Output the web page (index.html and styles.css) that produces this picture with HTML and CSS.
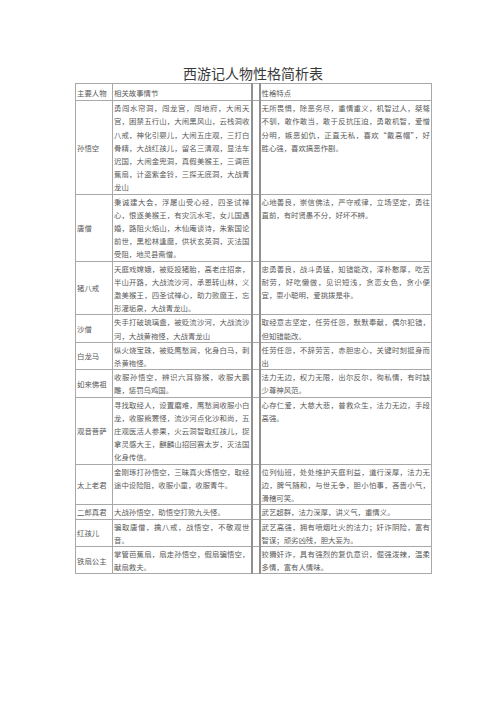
FILE: index.html
```html
<!DOCTYPE html>
<html lang="zh-CN">
<head>
<meta charset="utf-8">
<title>西游记人物性格简析表</title>
<link rel="stylesheet" href="styles.css">
</head>
<body>
<div class="page">
  <h1 class="title">西游记人物性格简析表</h1>
  <table class="sheet">
    <colgroup>
      <col class="c-name"><col class="c-story"><col class="c-gap"><col class="c-trait">
    </colgroup>
    <tr class="head">
      <td>主要人物</td><td>相关故事情节</td><td class="gap"></td><td>性格特点</td>
    </tr>
    <tr>
      <td class="name">孙悟空</td>
      <td class="txt"><span>勇闯水帘洞，闯龙宫，闯地府，大闹天</span><span>宫，困禁五行山，大闹黑风山，云栈洞收</span><span>八戒，神化引婴儿，大闹五庄观，三打白</span><span>骨精，大战红孩儿，留名三清观，显法车</span><span>迟国，大闹金兜洞，真假美猴王，三调芭</span><span>蕉扇，计盗紫金铃，三探无底洞，大战青</span><span>龙山</span></td>
      <td class="gap"></td>
      <td class="txt"><span>无所畏惧，除恶务尽，重情重义，机智过人，桀骜</span><span>不驯，敢作敢当，敢于反抗压迫，勇敢机智，爱憎</span><span>分明，嫉恶如仇，正直无私，喜欢“戴高帽”，好</span><span>胜心强，喜欢搞恶作剧。</span></td>
    </tr>
    <tr>
      <td class="name">唐僧</td>
      <td class="txt"><span>秉诚建大会，浮屠山受心经，四圣试禅</span><span>心，恨逐美猴王，有灾沉水宅，女儿国遇</span><span>婚，路阻火焰山，木仙庵谈诗，朱紫国论</span><span>前世，黑松林逢魔，供状玄英洞，灭法国</span><span>受阻，地灵县斋僧。</span></td>
      <td class="gap"></td>
      <td class="txt"><span>心地善良，崇信佛法，严守戒律，立场坚定，勇往</span><span>直前，有时贤愚不分，好坏不辨。</span></td>
    </tr>
    <tr>
      <td class="name">猪八戒</td>
      <td class="txt"><span>天庭戏嫦娥，被贬投猪胎，高老庄招亲，</span><span>半山开路，大战流沙河，承恩转山林，义</span><span>激美猴王，四圣试禅心，助力败魔王，忘</span><span>形灌垢泉，大战青龙山。</span></td>
      <td class="gap"></td>
      <td class="txt"><span>忠勇善良，战斗勇猛，知错能改，淳朴憨厚，吃苦</span><span>耐劳，好吃懒做，见识短浅，贪恋女色，贪小便</span><span>宜，耍小聪明，爱挑拨是非。</span></td>
    </tr>
    <tr>
      <td class="name">沙僧</td>
      <td class="txt"><span>失手打破琉璃盏，被贬流沙河，大战流沙</span><span>河，大战黄袍怪，大战青龙山</span></td>
      <td class="gap"></td>
      <td class="txt"><span>取经意志坚定，任劳任怨，默默奉献，偶尔犯错，</span><span>但知错能改。</span></td>
    </tr>
    <tr>
      <td class="name">白龙马</td>
      <td class="txt"><span>纵火烧宝珠，被贬鹰愁涧，化身白马，刺</span><span>杀黄袍怪。</span></td>
      <td class="gap"></td>
      <td class="txt"><span>任劳任怨，不辞劳苦，赤胆忠心，关键时刻挺身而</span><span>出</span></td>
    </tr>
    <tr>
      <td class="name">如来佛祖</td>
      <td class="txt"><span>收服孙悟空，辨识六耳猕猴，收服大鹏</span><span>雕，惩罚乌鸡国。</span></td>
      <td class="gap"></td>
      <td class="txt"><span>法力无边，权力无限，出尔反尔，徇私情，有时缺</span><span>少尊神风范。</span></td>
    </tr>
    <tr>
      <td class="name">观音菩萨</td>
      <td class="txt"><span>寻找取经人，设置磨难，鹰愁涧收服小白</span><span>龙，收服熊罴怪，流沙河点化沙和尚，五</span><span>庄观医活人参果，火云洞智取红孩儿，捉</span><span>拿灵感大王，麒麟山招回赛太岁，灭法国</span><span>化身传信。</span></td>
      <td class="gap"></td>
      <td class="txt"><span>心存仁爱，大慈大悲，普救众生，法力无边，手段</span><span>高强。</span></td>
    </tr>
    <tr>
      <td class="name">太上老君</td>
      <td class="txt"><span>金刚琢打孙悟空，三昧真火炼悟空，取经</span><span>途中设险阻，收服小童，收服青牛。</span></td>
      <td class="gap"></td>
      <td class="txt"><span>位列仙班，处处维护天庭利益，道行深厚，法力无</span><span>边，脾气随和，与世无争，胆小怕事，吝啬小气，</span><span>滑稽可笑。</span></td>
    </tr>
    <tr>
      <td class="name">二郎真君</td>
      <td class="txt"><span>大战孙悟空，助悟空打败九头怪。</span></td>
      <td class="gap"></td>
      <td class="txt"><span>武艺超群，法力深厚，讲义气，重情义。</span></td>
    </tr>
    <tr>
      <td class="name">红孩儿</td>
      <td class="txt"><span>骗取唐僧，擒八戒，战悟空，不敬观世</span><span>音。</span></td>
      <td class="gap"></td>
      <td class="txt"><span>武艺高强，拥有喷烟吐火的法力；奸诈阴险，富有</span><span>智谋；顽劣凶残，胆大妄为。</span></td>
    </tr>
    <tr>
      <td class="name">铁扇公主</td>
      <td class="txt"><span>掌管芭蕉扇，扇走孙悟空，假扇骗悟空，</span><span>献扇救夫。</span></td>
      <td class="gap"></td>
      <td class="txt"><span>狡猾奸诈，具有强烈的复仇意识，倔强泼辣，温柔</span><span>多情，富有人情味。</span></td>
    </tr>
  </table>
</div>
</body>
</html>
```

FILE: styles.css
```css
html, body {
  margin: 0;
  padding: 0;
  background: #ffffff;
}

body {
  font-family: "Noto Sans CJK SC", "Liberation Serif", serif;
  color: #5a5a5a;
}

.page {
  padding: 65px 0 0 75px;
}

.title {
  width: 356px;
  margin: 0 0 1px;
  text-align: center;
  font-size: 14px;
  line-height: 17px;
  font-weight: normal;
  color: #3a3a3a;
}

.sheet {
  width: 356px;
  border-collapse: collapse;
  table-layout: fixed;
  font-size: 7.4px;
  line-height: 13.2px;
}

.c-name { width: 37px; }
.c-story { width: 139px; }
.c-gap { width: 8px; }
.c-trait { width: 172px; }

.sheet td {
  border: 1px solid #a8a8a8;
  padding: 0 1px;
  vertical-align: top;
  text-align: left;
}

.sheet td.gap {
  border-left: 2px solid #909090;
  border-right: 2px solid #909090;
}

.head td {
  padding: 2px 1px 1px;
}

.sheet td.name {
  vertical-align: middle;
  white-space: nowrap;
}

.txt span {
  display: block;
  white-space: nowrap;
  text-align: justify;
  text-align-last: justify;
}

.txt span:last-child {
  text-align-last: auto;
}
```
